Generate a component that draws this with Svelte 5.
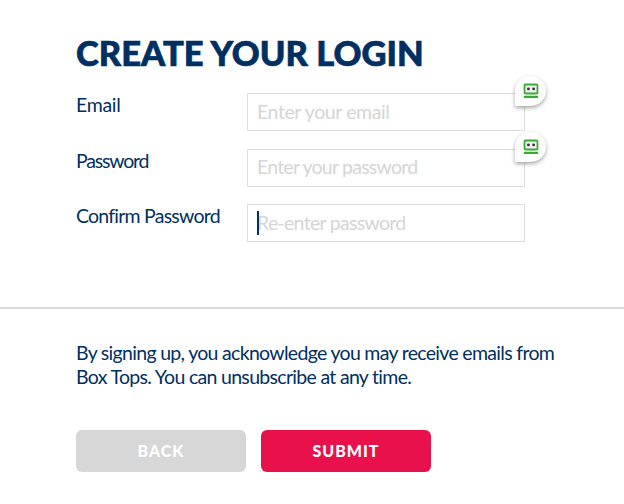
<script lang="ts">
	interface Field {
		id: string;
		label: string;
		placeholder: string;
		type: string;
		badge: boolean;
	}

	const fields: Field[] = [
		{ id: 'email', label: 'Email', placeholder: 'Enter your email', type: 'email', badge: true },
		{ id: 'password', label: 'Password', placeholder: 'Enter your password', type: 'password', badge: true },
		{ id: 'confirm', label: 'Confirm Password', placeholder: 'Re-enter password', type: 'password', badge: false }
	];

	let values = $state<Record<string, string>>({ email: '', password: '', confirm: '' });
	let active = $state('confirm');
</script>

<form class="signup" onsubmit={(e) => e.preventDefault()}>
	<section class="details">
		<h1>CREATE YOUR LOGIN</h1>

		{#each fields as field (field.id)}
			<div class="row row-{field.id}">
				<label for={field.id}>{field.label}</label>
				<div class="control">
					<input
						id={field.id}
						type={field.type}
						placeholder={field.placeholder}
						bind:value={values[field.id]}
						onfocus={() => (active = field.id)}
					/>
					{#if active === field.id && !values[field.id]}
						<span class="caret"></span>
					{/if}
					{#if field.badge}
						<span class="badge">
							<svg width="16" height="16" viewBox="0 0 16 16" aria-hidden="true">
								<rect x="1.5" y="1.5" width="13" height="9" rx="1" fill="#f4f1f5" stroke="#39aa35" stroke-width="1.8" />
								<circle cx="5.4" cy="5.9" r="1.4" fill="#302d35" />
								<circle cx="10.6" cy="5.9" r="1.4" fill="#302d35" />
								<rect x="0.7" y="12.7" width="14.6" height="2.4" rx="1" fill="#39aa35" />
							</svg>
						</span>
					{/if}
				</div>
			</div>
		{/each}
	</section>

	<section class="footer">
		<p>
			By signing up, you acknowledge you may receive emails from<br />
			Box Tops. You can unsubscribe at any time.
		</p>
		<div class="actions">
			<button type="button" class="back">BACK</button>
			<button type="submit" class="submit">SUBMIT</button>
		</div>
	</section>
</form>

<style>
	:global(body) {
		background: #fff;
	}

	.signup {
		box-sizing: border-box;
		width: 624px;
		height: 504px;
		overflow: hidden;
		font-family: Lato, 'Liberation Sans', sans-serif;
		color: #002f62;
	}

	.details {
		box-sizing: border-box;
		height: 309px;
		padding: 33px 0 0 76px;
		border-bottom: 2px solid #d8d8d8;
	}

	h1 {
		margin: 0 0 20px;
		font-size: 34.5px;
		line-height: 40px;
		font-weight: 900;
		letter-spacing: 0.05px;
		-webkit-text-stroke: 0.7px #002f62;
		white-space: nowrap;
	}

	.row {
		display: flex;
		align-items: flex-start;
		height: 55.5px;
	}

	label {
		width: 171px;
		font-size: 19.5px;
		line-height: 24px;
		letter-spacing: -0.77px;
		white-space: nowrap;
	}

	.row-email label {
		letter-spacing: -0.3px;
	}

	.row-password label {
		letter-spacing: -1.2px;
	}

	.control {
		position: relative;
		width: 278px;
		height: 38px;
	}

	input {
		box-sizing: border-box;
		display: block;
		width: 100%;
		height: 100%;
		margin: 0;
		padding: 0 9px 2px;
		border: 1px solid #dedede;
		border-radius: 0;
		outline: none;
		background: #fff;
		font-family: inherit;
		font-size: 19.5px;
		letter-spacing: -0.7px;
		color: #002f62;
		caret-color: transparent;
	}

	.row-email input {
		letter-spacing: -0.4px;
	}

	.row-password input {
		letter-spacing: -0.77px;
	}

	input::placeholder {
		color: #d5d5d5;
		opacity: 1;
	}

	.caret {
		position: absolute;
		left: 10px;
		top: 7px;
		width: 1.5px;
		height: 24px;
		background: #002f62;
	}

	.badge {
		position: absolute;
		left: 268px;
		top: -17px;
		display: flex;
		align-items: center;
		justify-content: center;
		width: 31px;
		height: 30px;
		border-radius: 50% 50% 50% 2px;
		background: #fff;
		box-shadow: 0 2px 4px rgba(0, 0, 0, 0.35);
	}

	.footer {
		padding: 32px 0 0 76px;
	}

	p {
		margin: 0 0 41px;
		font-size: 19.5px;
		line-height: 24px;
		letter-spacing: -0.69px;
		white-space: nowrap;
	}

	.actions {
		display: flex;
		gap: 15px;
	}

	button {
		width: 170px;
		height: 42px;
		padding: 0 0 1px;
		border: none;
		border-radius: 6px;
		font-family: inherit;
		font-size: 16px;
		font-weight: 900;
		letter-spacing: 1px;
		color: #fff;
	}

	.back {
		background: #d7d7d7;
	}

	.submit {
		background: #e8114b;
	}
</style>
